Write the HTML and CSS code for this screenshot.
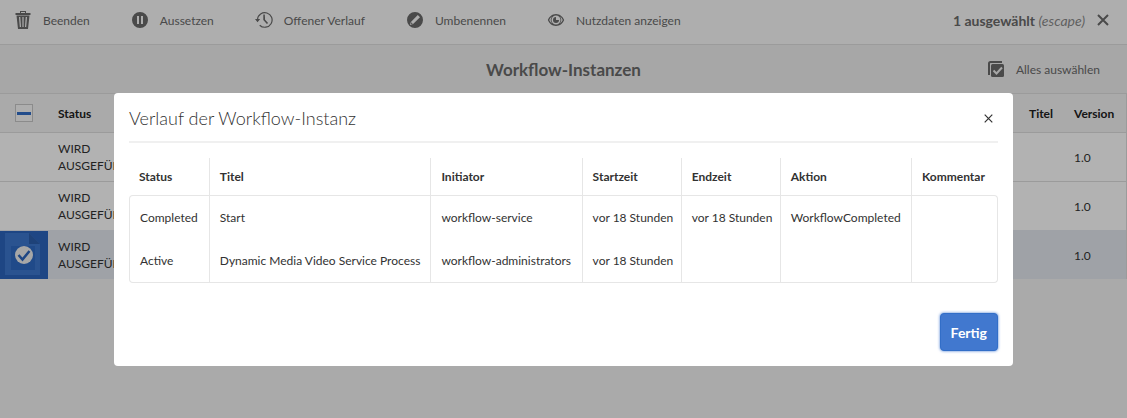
FILE: index.html
```html
<!DOCTYPE html>
<html lang="de">
<head>
<meta charset="utf-8">
<title>Workflow-Instanzen</title>
<link rel="stylesheet" href="styles.css">
</head>
<body>
<header class="actionbar">
  <div class="actions">
    <button class="action" type="button">
      <svg class="icon" viewBox="0 0 18 18" aria-hidden="true"><path fill="currentColor" fill-rule="evenodd" d="M6 0h6v2h4.500v2h-15V2H6zM7 1v1h4V1zM2.500 4.500h13L14 18H4zM5 6l.8 10h1.200L6.300 6zM8.400 6v10h1.200V6zM11.700 6 11 16h1.200L13 6z"/></svg>
      <span>Beenden</span>
    </button>
    <button class="action" type="button">
      <svg class="icon" viewBox="0 0 18 18" aria-hidden="true"><path fill="currentColor" fill-rule="evenodd" d="M9 1a8 8 0 1 0 0 16A8 8 0 1 0 9 1zM6 5h2v8H6zM10 5h2v8h-2z"/></svg>
      <span>Aussetzen</span>
    </button>
    <button class="action" type="button">
      <svg class="icon" viewBox="0 0 18 18" aria-hidden="true"><path fill="none" stroke="currentColor" stroke-width="1.200" d="M2.500 8.500a7.300 7.300 0 1 1 2.200 5.700M6 15.200l1.500.8"/><path fill="currentColor" d="M0 8h5.200L2.500 11.200zM8.300 3.500h1.500l.3 5.200 3 3.300-1.200 1.100-3.600-4z"/></svg>
      <span>Offener Verlauf</span>
    </button>
    <button class="action" type="button">
      <svg class="icon" viewBox="0 0 18 18" aria-hidden="true"><path fill="currentColor" fill-rule="evenodd" d="M9 1a8 8 0 1 0 0 16A8 8 0 1 0 9 1zM11.800 4.100l2.200 2.200-6.900 6.800-3.200 1 1-3.200zM5.500 11.300l-.6 1.900 1.800-.6z"/></svg>
      <span>Umbenennen</span>
    </button>
    <button class="action" type="button">
      <svg class="icon" viewBox="0 0 18 18" aria-hidden="true"><path fill="currentColor" fill-rule="evenodd" d="M9 3C5 3 2 6 .8 9 2 12 5 15 9 15s7-3 8.200-6C16 6 13 3 9 3zM9 4.500a4.500 4.500 0 1 1 0 9 4.500 4.500 0 1 1 0-9zM5 5.600a5.500 5.500 0 0 0 0 6.800C3.700 11.500 2.800 10.200 2.300 9 2.800 7.800 3.700 6.500 5 5.600zM13 5.600c1.300.9 2.200 2.200 2.700 3.400-.5 1.200-1.400 2.500-2.700 3.400a5.500 5.500 0 0 0 0-6.800z"/><path fill="currentColor" d="M9 6v3h3a3 3 0 1 1-3-3z"/></svg>
      <span>Nutzdaten anzeigen</span>
    </button>
  </div>
  <button class="deselect" type="button">
    <span><b>1 ausgewählt</b> <i>(escape)</i></span>
    <svg class="cross" viewBox="0 0 12 12" aria-hidden="true"><path fill="none" stroke="currentColor" stroke-width="2" d="M1 1l10 10M11 1 1 11"/></svg>
  </button>
</header>

<div class="titlebar">
  <h1>Workflow-Instanzen</h1>
  <button class="selectall" type="button">
    <svg class="icon" viewBox="0 0 18 18" aria-hidden="true"><path fill="none" stroke="currentColor" stroke-width="2" d="M2 15V3.500Q2 2 3.500 2H15"/><rect x="4" y="4" width="13" height="13" rx="1.500" fill="currentColor"/><path class="tick" d="m6.500 10.500 3 3 5.500-6"/></svg>
    <span>Alles auswählen</span>
  </button>
</div>

<table class="list">
  <colgroup><col class="c-select"><col class="c-state"><col><col class="c-title"><col class="c-version"></colgroup>
  <thead>
    <tr>
      <th><input class="checkbox" type="checkbox" aria-label="Auswahl umschalten"></th>
      <th>Status</th><th></th><th>Titel</th><th>Version</th>
    </tr>
  </thead>
  <tbody>
    <tr><td></td><td>WIRD AUSGEFÜHRT</td><td></td><td></td><td>1.0</td></tr>
    <tr><td></td><td>WIRD AUSGEFÜHRT</td><td></td><td></td><td>1.0</td></tr>
    <tr class="selected">
      <td class="thumb"><svg viewBox="0 0 48 48" aria-hidden="true"><rect width="48" height="48" fill="#2c65bd"/><path fill="#3d78ce" d="M5 2h24l11 11v31H5z"/><path fill="#2c5fae" d="M29 2v11h11z"/><path fill="#2f6bc4" d="M11 15h24v24H11z"/><circle cx="24" cy="24" r="9" fill="#f0f0f0"/><path fill="none" stroke="#2c65bd" stroke-width="2.500" d="m18.500 24 4 4.500 7-8.500"/></svg></td>
      <td>WIRD AUSGEFÜHRT</td><td></td><td></td><td>1.0</td>
    </tr>
  </tbody>
</table>

<div class="backdrop">
  <section class="dialog" role="dialog" aria-modal="true" aria-labelledby="dialog-title">
    <header class="dialog-head">
      <h2 id="dialog-title">Verlauf der Workflow-Instanz</h2>
      <button class="close" type="button" aria-label="Schließen"><svg viewBox="0 0 9 9" aria-hidden="true"><path fill="none" stroke="currentColor" stroke-width="1.200" d="m.7.700 7.600 7.600M8.300.700.700 8.300"/></svg></button>
    </header>
    <table class="history">
      <colgroup><col class="h-status"><col class="h-title"><col class="h-initiator"><col class="h-time"><col class="h-time"><col class="h-action"><col></colgroup>
      <thead>
        <tr><th>Status</th><th>Titel</th><th>Initiator</th><th>Startzeit</th><th>Endzeit</th><th>Aktion</th><th>Kommentar</th></tr>
      </thead>
      <tbody>
        <tr><td>Completed</td><td>Start</td><td>workflow-service</td><td>vor 18 Stunden</td><td>vor 18 Stunden</td><td>WorkflowCompleted</td><td></td></tr>
        <tr><td>Active</td><td>Dynamic Media Video Service Process</td><td>workflow-administrators</td><td>vor 18 Stunden</td><td></td><td></td><td></td></tr>
      </tbody>
    </table>
    <footer class="dialog-foot"><button class="done" type="button">Fertig</button></footer>
  </section>
</div>
</body>
</html>
```

FILE: styles.css
```css
* { box-sizing: border-box; }

body {
  margin: 0;
  background: #f4f4f4;
  color: #323232;
  font: 12px/17px Lato, "Open Sans", sans-serif;
}

button {
  padding: 0;
  border: 0;
  background: none;
  color: inherit;
  font: inherit;
  cursor: pointer;
}

.actionbar {
  display: flex;
  justify-content: space-between;
  height: 45px;
  padding: 0 18px 4px 14px;
  border-bottom: 1px solid #dedede;
  background: #fafafa;
  color: #6a6a6a;
}

.actions { display: flex; gap: 41px; }

.action, .selectall {
  display: flex;
  align-items: center;
  gap: 11px;
  white-space: nowrap;
}

.icon { display: block; width: 18px; height: 18px; }

.deselect {
  display: flex;
  align-items: center;
  gap: 12px;
  font-size: 14px;
  white-space: nowrap;
}

.deselect b { font-weight: 700; }
.deselect i { color: #8a8a8a; }
.cross { width: 12px; height: 12px; }

.titlebar {
  display: grid;
  grid-template-columns: 1fr auto 1fr;
  align-items: center;
  height: 49px;
  padding: 0 27px;
  border-bottom: 1px solid #dedede;
  background: #f0f0f0;
  color: #6a6a6a;
}

.titlebar h1 {
  grid-column: 2;
  margin: 0;
  font-size: 17px;
  font-weight: 700;
}

.selectall { justify-self: end; }
.tick { fill: none; stroke: #f0f0f0; stroke-width: 2; }

.list {
  width: 100%;
  border-right: 1px solid #dedede;
  border-spacing: 0;
  table-layout: fixed;
}

.c-select { width: 48px; }
.c-state { width: 84px; }
.c-title { width: 45px; }
.c-version { width: 62px; }

.list th, .list td { height: 49px; padding: 0 0 0 10px; text-align: left; }
.list th { height: 38px; font-weight: 700; color: #202020; }
.list td { border-top: 1px solid #dedede; background: #fff; }
.list .selected td { border-color: #e4e9f0; background: #e4e9f0; }
.list th:first-child { padding: 0 0 0 15px; }
.list .selected .thumb { padding: 0; }
.thumb svg { display: block; width: 48px; height: 48px; }

.checkbox {
  display: block;
  appearance: none;
  width: 18px;
  height: 18px;
  margin: 0;
  border: 1px solid #c8c8c8;
  background: linear-gradient(#326ec8, #326ec8) center / 14px 3px no-repeat #fafafa;
}

.backdrop {
  position: fixed;
  inset: 0;
  padding: 93px 114px 0;
  background: rgba(0, 0, 0, .3);
}

.dialog {
  padding: 0 15px 15px;
  border-radius: 4px;
  background: #fff;
}

.dialog-head {
  display: flex;
  align-items: center;
  justify-content: space-between;
  height: 50px;
  margin-bottom: 15px;
  padding: 2px 5px 0 0;
  border-bottom: 2px solid #f0f0f0;
}

.dialog-head h2 { margin: 0; font-size: 18px; font-weight: 300; line-height: 24px; }
.close svg { display: block; width: 9px; height: 9px; }

.history { width: 100%; border-spacing: 0; table-layout: fixed; white-space: nowrap; }
.h-status { width: 9.300%; }
.h-title { width: 25.500%; }
.h-initiator { width: 17.400%; }
.h-time { width: 11.400%; }
.h-action { width: 15.100%; }

.history th, .history td { padding: 0 0 0 10px; border-right: 1px solid #e6e6e6; text-align: left; }
.history th { height: 37px; font-weight: 700; }
.history th:last-child { border-right-color: transparent; }
.history td { height: 44px; }
.history td:first-child { border-left: 1px solid #e6e6e6; }
.history tbody tr:first-child td { border-top: 1px solid #e6e6e6; }
.history tbody tr:first-child td:first-child { border-top-left-radius: 4px; }
.history tbody tr:first-child td:last-child { border-top-right-radius: 4px; }
.history tbody tr:last-child td { border-bottom: 1px solid #e6e6e6; }
.history tbody tr:last-child td:first-child { border-bottom-left-radius: 4px; }
.history tbody tr:last-child td:last-child { border-bottom-right-radius: 4px; }

.dialog-foot { display: flex; justify-content: flex-end; padding-top: 30px; }

.done {
  height: 38px;
  padding: 0 10px;
  border: 1px solid #326ec8;
  border-radius: 4px;
  background: #4178cf;
  box-shadow: 0 0 3px #4178cf;
  color: #fff;
  font-size: 14px;
  font-weight: 700;
}
```
